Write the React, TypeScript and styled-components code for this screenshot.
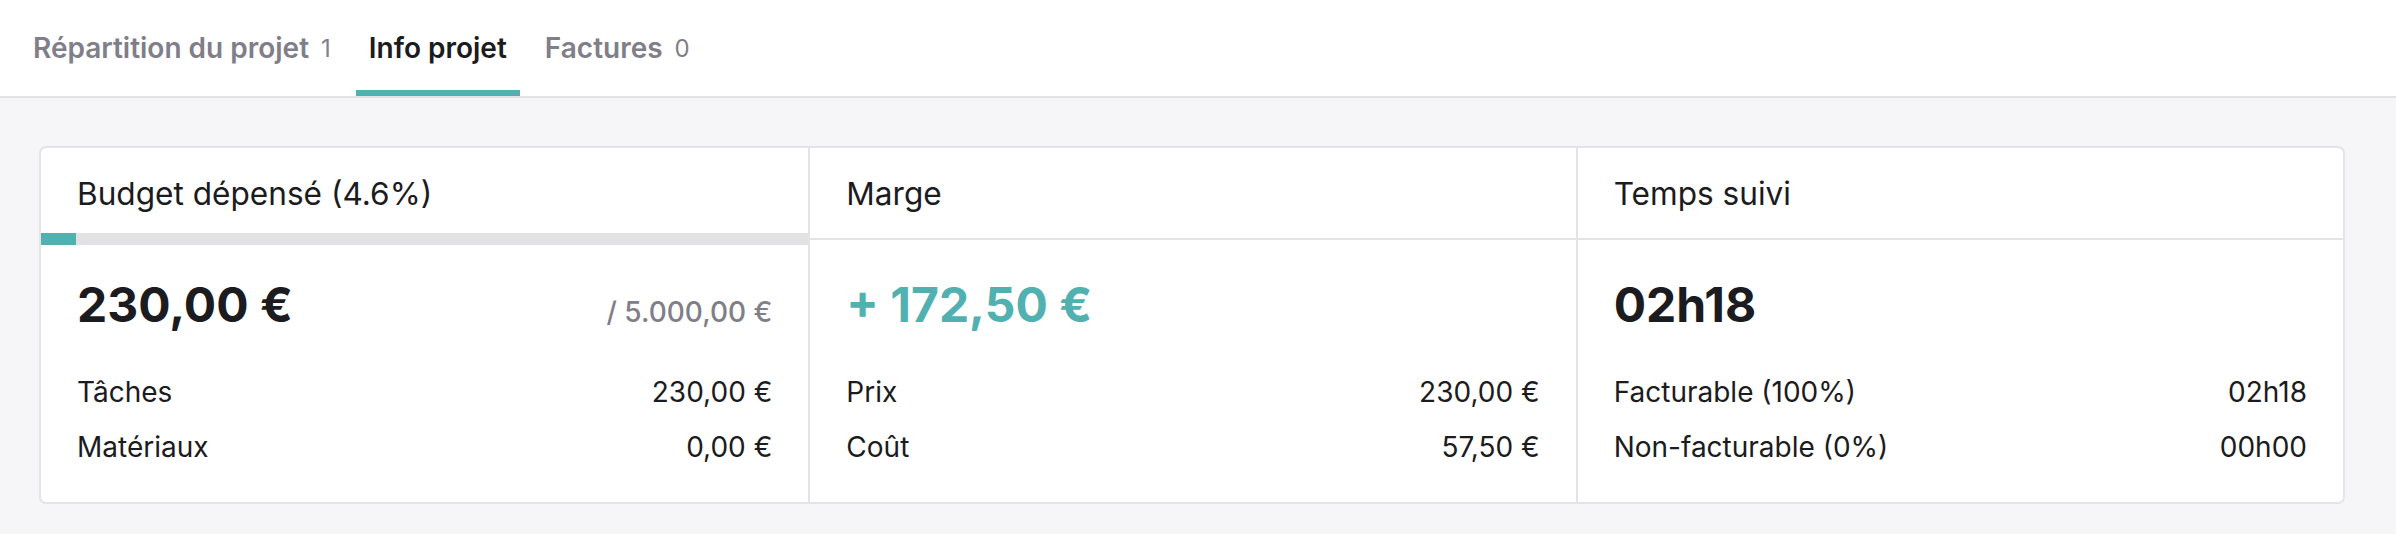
import React from "react";
import styled, { createGlobalStyle } from "styled-components";

const GlobalStyle = createGlobalStyle`
  html, body {
    margin: 0;
    padding: 0;
    background: #ffffff;
    font-family: Inter, "Noto Sans", "Liberation Sans", sans-serif;
    color: #1b1b20;
  }
  * { box-sizing: border-box; }
`;

const TEAL = "#51b0b0";
const BORDER = "#e4e4e7";
const MUTED = "#7f7e89";

const Page = styled.div`
  display: flex;
  flex-direction: column;
`;

const TabBar = styled.nav`
  display: flex;
  align-items: stretch;
  height: 98px;
  padding-left: 20px;
  gap: 12px;
  border-bottom: 2px solid #e2e2e5;
  background: #ffffff;
`;

const Tab = styled.div<{ $active?: boolean }>`
  position: relative;
  display: flex;
  align-items: center;
  padding: 0 13px;
  font-size: 28px;
  font-weight: 600;
  color: ${(p) => (p.$active ? "#1b1b20" : MUTED)};
  &::after {
    content: "";
    position: absolute;
    left: 0;
    right: 0;
    bottom: 0;
    height: 6px;
    background: ${(p) => (p.$active ? TEAL : "transparent")};
  }
`;

const Count = styled.span`
  margin-left: 12px;
  font-size: 24px;
  font-weight: 400;
  color: ${MUTED};
`;

const Content = styled.main`
  background: #f6f6f8;
  padding: 48px 51px 31px 39px;
`;

const Card = styled.section`
  display: grid;
  grid-template-columns: repeat(3, 1fr);
  background: #ffffff;
  border: 2px solid ${BORDER};
  border-radius: 7px;
  overflow: hidden;
`;

const Column = styled.div<{ $first?: boolean }>`
  display: flex;
  flex-direction: column;
  border-left: ${(p) => (p.$first ? "none" : `2px solid ${BORDER}`)};
`;

const ColHeader = styled.header`
  position: relative;
  display: flex;
  align-items: center;
  height: 92px;
  padding: 0 36px;
  font-size: 31.6px;
  font-weight: 400;
  border-bottom: 2px solid ${BORDER};
`;

const Track = styled.div`
  position: absolute;
  left: 0;
  right: 0;
  bottom: -7px;
  height: 12px;
  background: #e2e2e4;
`;

const Fill = styled.div`
  height: 100%;
  background: ${TEAL};
`;

const Body = styled.div`
  display: flex;
  flex-direction: column;
  padding: 36px 36px 28px 36px;
`;

const Headline = styled.div`
  display: flex;
  justify-content: space-between;
  align-items: baseline;
  height: 58px;
  margin-bottom: 30px;
`;

const BigValue = styled.div<{ $color?: string }>`
  font-size: 48px;
  font-weight: 700;
  line-height: 58px;
  color: ${(p) => p.$color ?? "#1b1b20"};
`;

const Total = styled.div`
  font-size: 28px;
  font-weight: 500;
  color: ${MUTED};
`;

const Row = styled.div`
  display: flex;
  justify-content: space-between;
  align-items: center;
  height: 55px;
  font-size: 28px;
  color: #1b1b20;
`;

const columns = [
  {
    title: "Budget dépensé (4.6%)",
    progress: 4.6,
    value: "230,00 €",
    total: "/ 5.000,00 €",
    rows: [
      ["Tâches", "230,00 €"],
      ["Matériaux", "0,00 €"],
    ],
  },
  {
    title: "Marge",
    value: "+ 172,50 €",
    color: TEAL,
    rows: [
      ["Prix", "230,00 €"],
      ["Coût", "57,50 €"],
    ],
  },
  {
    title: "Temps suivi",
    value: "02h18",
    rows: [
      ["Facturable (100%)", "02h18"],
      ["Non-facturable (0%)", "00h00"],
    ],
  },
];

export default function App() {
  return (
    <>
      <GlobalStyle />
      <Page>
        <TabBar>
          <Tab>
            Répartition du projet<Count>1</Count>
          </Tab>
          <Tab $active>Info projet</Tab>
          <Tab>
            Factures<Count>0</Count>
          </Tab>
        </TabBar>
        <Content>
          <Card>
            {columns.map((c, i) => (
              <Column key={c.title} $first={i === 0}>
                <ColHeader>
                  {c.title}
                  {c.progress !== undefined && (
                    <Track>
                      <Fill style={{ width: `${c.progress}%` }} />
                    </Track>
                  )}
                </ColHeader>
                <Body>
                  <Headline>
                    <BigValue $color={c.color}>{c.value}</BigValue>
                    {c.total && <Total>{c.total}</Total>}
                  </Headline>
                  {c.rows.map(([l, v]) => (
                    <Row key={l}>
                      <span>{l}</span>
                      <span>{v}</span>
                    </Row>
                  ))}
                </Body>
              </Column>
            ))}
          </Card>
        </Content>
      </Page>
    </>
  );
}
